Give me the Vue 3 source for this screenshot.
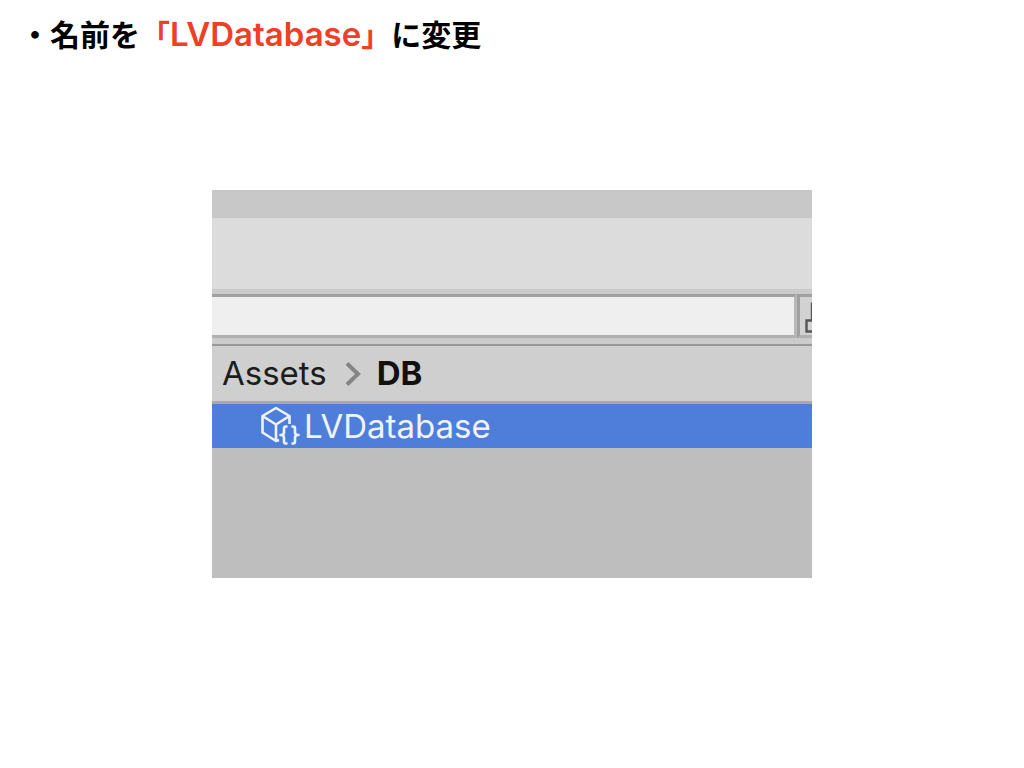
<script setup>
const title = { before: '・名前を', name: 'LVDatabase', after: 'に変更' }
</script>

<template>
  <main class="slide">
    <h1 class="title">{{ title.before }}<span class="accent">「<span class="latin">{{ title.name }}</span>」</span>{{ title.after }}</h1>
    <section class="panel" aria-label="Project">
      <div class="strip"></div>
      <div class="header"></div>
      <div class="toolbar">
        <input class="search" type="text" aria-label="Search" />
        <button class="filter" type="button" aria-label="Filter by type">
          <svg width="12" height="38" viewBox="0 0 12 38" fill="none" stroke="#555" stroke-width="2.4">
            <path d="M12 5.500V23M12 23.500H6.500v11H12" />
          </svg>
        </button>
      </div>
      <nav class="crumbs" aria-label="Folder path">
        <a class="crumb" href="#">Assets</a>
        <svg class="arrow" width="18" height="26" viewBox="0 0 18 26" fill="none" stroke="#858585" stroke-width="4">
          <path d="M4 2.500L15 13L4 23.500" />
        </svg>
        <a class="crumb current" href="#" aria-current="page">DB</a>
      </nav>
      <ul class="files">
        <li class="file">
          <svg class="asset" width="40" height="40" viewBox="0 0 40 40" fill="none" stroke="#eef3fc" stroke-width="2.600" stroke-linejoin="round">
            <path d="M19 34L16 35L2.500 26.500V10L16 2L29.500 10V18M2.500 10L16 18.500L29.500 10M16 18.500V35" />
            <path d="M27.500 20.500H26Q24 20.500 24 22.500V26.500Q24 29 20.500 29Q24 29 24 31.500V35.500Q24 37.500 26 37.500H27.500M31.500 20.500H33Q35 20.500 35 22.500V26.500Q35 29 38.500 29Q35 29 35 31.500V35.500Q35 37.500 33 37.500H31.500" />
          </svg>
          <span>LVDatabase</span>
        </li>
      </ul>
    </section>
  </main>
</template>

<style>
body {
  margin: 0;
  background: #fff;
}
</style>

<style scoped>
.slide {
  box-sizing: border-box;
  padding: 9px 20px;
  font-family: Inter, "Noto Sans CJK JP", sans-serif;
}
.title {
  margin: 0;
  font: 700 30px/48px "Noto Sans CJK JP", sans-serif;
  color: #000;
}
.accent {
  color: #ee4026;
}
.latin {
  font: 600 33px/48px Inter, sans-serif;
}
.panel {
  box-sizing: border-box;
  max-width: 600px;
  margin: 132px auto 0;
  padding-bottom: 130px;
  background: #bebebe;
  overflow: hidden;
}
.strip {
  height: 28px;
  background: #c8c8c8;
}
.header {
  height: 71px;
  background: #dcdcdc;
}
.toolbar {
  display: flex;
  padding: 5px 0 6px;
  background: #cbcbcb;
}
.search,
.filter {
  box-sizing: border-box;
  height: 44px;
  margin: 0;
  border: 3px solid #a0a0a0;
  border-bottom-color: #b0b0b0;
  border-radius: 0;
}
.search {
  flex: 1;
  min-width: 0;
  padding: 0 12px;
  border-left: 0;
  border-right-color: #b8b8b8;
  background: #efefef;
  font: 33px/38px Inter, sans-serif;
  outline: none;
}
.filter {
  display: flex;
  width: 15px;
  padding: 0;
  border-right: 0;
  background: #d2d2d2;
  overflow: hidden;
}
.crumbs {
  display: flex;
  align-items: center;
  gap: 16px;
  padding: 0 10px;
  border-top: 2px solid #999;
  border-bottom: 3px solid #a9aaa7;
  background: #cfcfcf;
  line-height: 55px;
}
.crumb {
  font-size: 33px;
  color: #1c1c1c;
  text-decoration: none;
}
.current {
  font-weight: 700;
  color: #111;
}
.files {
  margin: 0;
  padding: 0;
  list-style: none;
}
.file {
  display: flex;
  align-items: center;
  gap: 4px;
  padding-left: 48px;
  background: #4e7eda;
  color: #eef3fc;
  font-size: 33px;
  line-height: 44px;
}
.asset {
  flex: none;
}
</style>
